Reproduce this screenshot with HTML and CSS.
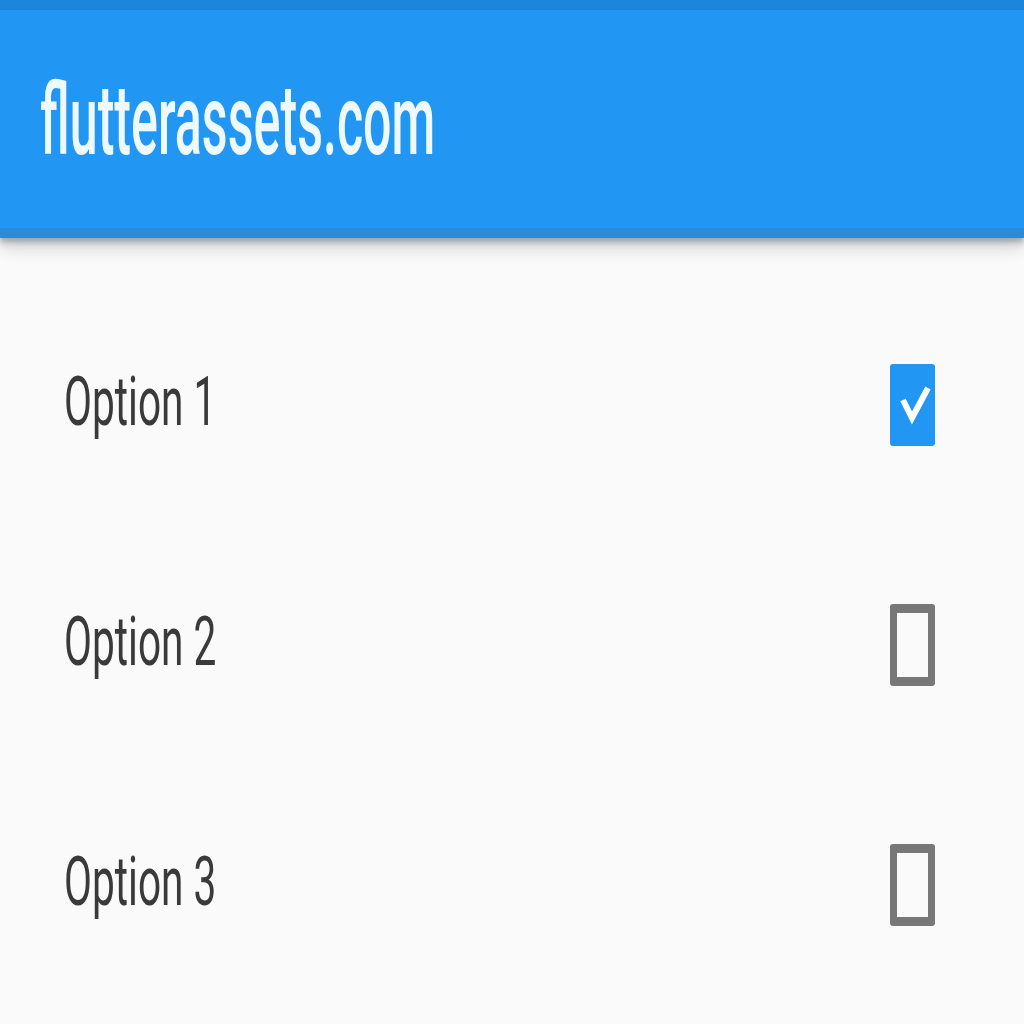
FILE: index.html
```html
<!DOCTYPE html>
<html>
<head>
<meta charset="utf-8">
<link rel="stylesheet" href="styles.css">
</head>
<body>
<div class="screen">
  <div class="statusbar"></div>
  <header class="appbar">
    <span class="title">flutterassets.com</span>
  </header>
  <main class="list">
    <div class="row">
      <span class="label">Option 1</span>
      <span class="box checked">
        <svg viewBox="0 0 45 82" width="45" height="82" preserveAspectRatio="none">
          <polyline points="13,36 22,54 38,24" fill="none" stroke="#fff" stroke-width="6" stroke-linejoin="miter"/>
        </svg>
      </span>
    </div>
    <div class="row">
      <span class="label">Option 2</span>
      <span class="box"></span>
    </div>
    <div class="row">
      <span class="label">Option 3</span>
      <span class="box"></span>
    </div>
  </main>
</div>
</body>
</html>
```
FILE: styles.css
```css
html, body {
  margin: 0;
  padding: 0;
  background: #fafafa;
}
.screen {
  width: 1024px;
  height: 1024px;
  overflow: hidden;
  background: #fafafa;
  font-family: Roboto, "Liberation Sans", sans-serif;
}
.statusbar {
  height: 10px;
  background: #1c86dc;
}
.appbar {
  height: 218px;
  background: #2196f3;
  border-bottom: 10px solid #2a8bd9;
  box-shadow: 0 4px 6px rgba(60, 90, 120, 0.45), 0 12px 14px rgba(0, 0, 0, 0.12);
  display: flex;
  align-items: center;
  padding-left: 40px;
  position: relative;
  z-index: 1;
}
.title {
  display: inline-block;
  color: #eef8ff;
  font-size: 99px;
  font-weight: 500;
  transform: scaleX(0.507);
  transform-origin: left center;
  white-space: nowrap;
  margin-top: 2px;
}
.list {
  padding-top: 47px;
}
.row {
  height: 240px;
  display: flex;
  align-items: center;
  justify-content: space-between;
  padding-left: 64px;
  padding-right: 89px;
}
.label {
  display: inline-block;
  font-size: 68px;
  color: #3a3a3a;
  transform: scaleX(0.597);
  transform-origin: left center;
  white-space: nowrap;
  margin-top: -6px;
}
.box {
  width: 45px;
  height: 82px;
  box-sizing: border-box;
  border-style: solid;
  border-color: #777;
  border-width: 9px 7px;
  border-radius: 3px;
  display: block;
}
.box.checked {
  background: #2196f3;
  border: none;
}
.box svg {
  display: block;
}
```
